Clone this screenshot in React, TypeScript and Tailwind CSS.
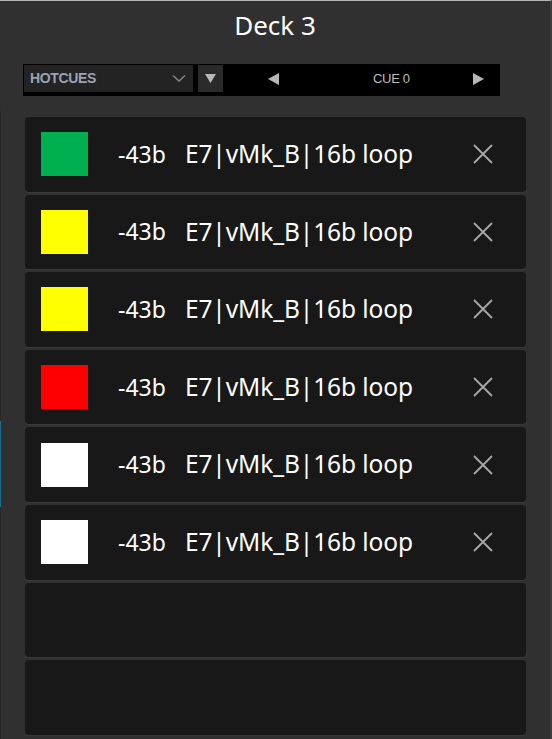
import React from 'react';

const cues = [
  { color: 'bg-[#00b050]', label: 'E7|vMk_B|16b loop' },
  { color: 'bg-[#ffff00]', label: 'E7|vMk_B|16b loop' },
  { color: 'bg-[#ffff00]', label: 'E7|vMk_B|16b loop' },
  { color: 'bg-[#ff0000]', label: 'E7|vMk_B|16b loop' },
  { color: 'bg-white', label: 'E7|vMk_B|16b loop' },
  { color: 'bg-white', label: 'E7|vMk_B|16b loop' },
  null,
  null,
];

const App: React.FC = () => {
  return (
    <div
      className="w-[552px] h-[739px] bg-[#303030] border-t border-t-[#b5b5b5] border-r-2 border-r-[#3c3c3c] flex flex-col overflow-hidden relative"
      style={{ fontFamily: '"Noto Sans", "Open Sans", sans-serif' }}
    >
      {/* left edge lines */}
      <div className="absolute left-0 top-[110px] bottom-0 w-px bg-[#262626]" />
      <div className="absolute left-0 top-[420px] h-[86px] w-px bg-[#1d6f8c]" />

      {/* Title */}
      <div className="h-[50px] flex items-center justify-center text-white text-[26px] pb-[2px]">
        Deck 3
      </div>

      {/* Toolbar */}
      <div className="mt-[13px] ml-[23px] w-[477px] h-[32px] bg-black flex items-start pt-px pl-px">
        <div className="w-[169px] h-[27px] shrink-0 bg-[#232323] flex items-center justify-between pl-[6px] pr-[7px]">
          <span
            className="text-[14px] font-bold text-[#9aa4b4] tracking-tight"
            style={{ fontFamily: '"Liberation Sans", Arial, sans-serif' }}
          >
            HOTCUES
          </span>
          <svg width="14" height="9" viewBox="0 0 14 9">
            <path d="M1 1.5 L7 7 L13 1.5" fill="none" stroke="#8a8a8a" strokeWidth="1.4" />
          </svg>
        </div>
        <div className="ml-[5px] w-[25px] h-[27px] shrink-0 bg-[#2a2a2a] flex items-center justify-center">
          <svg width="11" height="9" viewBox="0 0 11 9">
            <path d="M0 0 H11 L5.5 9 Z" fill="#b8b8b8" />
          </svg>
        </div>
        <div className="flex-1 h-[27px] flex items-center pl-[45px] whitespace-nowrap">
          <svg width="11" height="12" viewBox="0 0 11 12" className="shrink-0">
            <path d="M11 0 V12 L0 6 Z" fill="#b8b8b8" />
          </svg>
          <span
            className="text-[13px] text-[#bdbdbd] tracking-tight ml-[94px] w-[38px] shrink-0"
            style={{ fontFamily: '"Liberation Sans", Arial, sans-serif' }}
          >
            CUE 0
          </span>
          <svg width="11" height="12" viewBox="0 0 11 12" className="ml-[62px] shrink-0">
            <path d="M0 0 V12 L11 6 Z" fill="#b8b8b8" />
          </svg>
        </div>
      </div>

      {/* Cue rows */}
      <div className="mt-[21px] ml-[25px] w-[501px] flex flex-col gap-[3px]">
        {cues.map((cue, i) => (
          <div
            key={i}
            className="h-[74.6px] shrink-0 bg-[#181818] rounded-[4px] shadow-[0_1px_0_#3a3a3a] flex items-center"
          >
            {cue && (
              <>
                <div className={`ml-[16px] w-[47px] h-[44px] ${cue.color}`} />
                <span className="ml-[30px] text-white text-[23px] leading-none">-43b</span>
                <span className="ml-[19px] text-white text-[24.5px] leading-none tracking-[-0.1px]">
                  {cue.label}
                </span>
                <svg width="22" height="22" viewBox="0 0 22 22" className="ml-auto mr-[32px]">
                  <path d="M2 2 L20 20 M20 2 L2 20" stroke="#a8a8a8" strokeWidth="1.8" />
                </svg>
              </>
            )}
          </div>
        ))}
      </div>
    </div>
  );
};

export default App;
